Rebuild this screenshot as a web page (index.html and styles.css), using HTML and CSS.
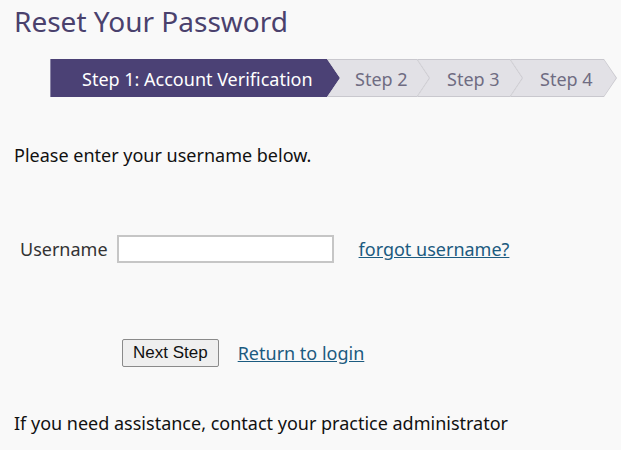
FILE: index.html
```html
<!DOCTYPE html>
<html>
<head>
<meta charset="utf-8">
<link rel="stylesheet" href="styles.css">
</head>
<body>
<h1 class="title">Reset Your Password</h1>
<div class="steps">
  <div class="step step-active step-first"><span class="step-label">Step 1: Account Verification</span></div>
  <div class="step step-2"><span class="step-label">Step 2</span></div>
  <div class="step step-3"><span class="step-label">Step 3</span></div>
  <div class="step step-4"><span class="step-label">Step 4</span></div>
</div>
<p class="intro">Please enter your username below.</p>
<div class="field-row">
  <label class="field-label" for="username">Username</label>
  <input class="field-input" id="username" type="text">
  <a class="link forgot" href="#">forgot username?</a>
</div>
<div class="actions">
  <button class="btn" type="button">Next Step</button>
  <a class="link" href="#">Return to login</a>
</div>
<p class="help">If you need assistance, contact your practice administrator</p>
</body>
</html>
```
FILE: styles.css
```css
html, body {
  margin: 0;
  padding: 0;
  background: #f9f9f9;
}
body {
  font-family: "Noto Sans", "Open Sans", sans-serif;
  color: #111;
  padding-left: 14px;
}
.title {
  margin: 0;
  padding-top: 2px;
  font-size: 28px;
  font-weight: 400;
  line-height: 38px;
  color: #4a416d;
}
.steps {
  display: flex;
  margin-top: 19px;
  margin-left: 36px;
  height: 38px;
}
.step {
  position: relative;
  display: flex;
  align-items: center;
  padding-top: 2px;
  background: #c9c8ce;
  margin-left: -13px;
  clip-path: polygon(0 0, calc(100% - 13px) 0, 100% 50%, calc(100% - 13px) 100%, 0 100%, 13px 50%);
  font-size: 18px;
  color: #6f6c82;
}
.step::before {
  content: "";
  position: absolute;
  inset: 1px;
  background: #e2e1e6;
  clip-path: polygon(0 0, calc(100% - 12px) 0, 100% 50%, calc(100% - 12px) 100%, 0 100%, 12px 50%);
}
.step-label {
  position: relative;
}
.step-first {
  margin-left: 0;
  clip-path: polygon(0 0, calc(100% - 13px) 0, 100% 50%, calc(100% - 13px) 100%, 0 100%);
  background: #4b4175;
  width: 290px;
  padding-left: 31px;
  box-sizing: border-box;
  color: #fff;
  border-left: 1px solid #8a84a6;
}
.step-first::before {
  display: none;
}
.step-2 { width: 103px; padding-left: 28px; box-sizing: border-box; }
.step-3 { width: 106px; padding-left: 30px; box-sizing: border-box; }
.step-4 { width: 107px; padding-left: 30px; box-sizing: border-box; }
.intro {
  margin: 46px 0 0;
  font-size: 18px;
  line-height: 24px;
}
.field-row {
  display: flex;
  align-items: center;
  margin-top: 68px;
  padding-left: 6px;
}
.field-label {
  font-size: 18px;
  color: #333;
  margin-right: 9px;
}
.field-input {
  width: 217px;
  height: 28px;
  box-sizing: border-box;
  border: 2px solid #c6c6c6;
  background: #fff;
  margin: 0;
  padding: 0 4px;
}
.link {
  font-size: 18px;
  color: #1c5b80;
  text-decoration: underline;
}
.forgot {
  margin-left: 25px;
}
.actions {
  display: flex;
  align-items: center;
  gap: 19px;
  margin-top: 76px;
  padding-left: 108px;
}
.btn {
  font-family: "Liberation Sans", Arial, sans-serif;
  font-size: 17px;
  color: #111;
  background: #efefef;
  border: 1px solid #8a8a8a;
  border-radius: 2px;
  height: 28px;
  padding: 0 10px;
}
.help {
  margin: 44px 0 0;
  font-size: 18px;
  line-height: 24px;
}
```
